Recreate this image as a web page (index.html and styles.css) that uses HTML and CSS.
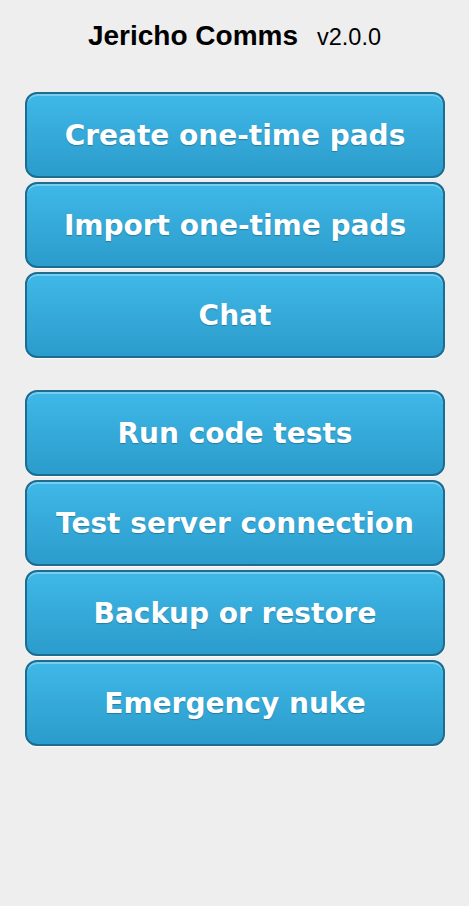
FILE: index.html
```html
<!DOCTYPE html>
<html>
<head>
<meta charset="utf-8">
<link rel="stylesheet" href="styles.css">
</head>
<body>
<header class="title">
  <span class="name">Jericho Comms</span>
  <span class="version">v2.0.0</span>
</header>
<main class="menu">
  <div class="group">
    <button class="btn">Create one-time pads</button>
    <button class="btn">Import one-time pads</button>
    <button class="btn">Chat</button>
  </div>
  <div class="group">
    <button class="btn">Run code tests</button>
    <button class="btn">Test server connection</button>
    <button class="btn">Backup or restore</button>
    <button class="btn">Emergency nuke</button>
  </div>
</main>
</body>
</html>
```
FILE: styles.css
```css
html, body {
  margin: 0;
  padding: 0;
  background: #eeeeee;
  height: 100%;
}
.title {
  display: flex;
  justify-content: center;
  align-items: baseline;
  gap: 19px;
  padding-top: 20px;
  height: 71px;
  box-sizing: border-box;
  font-family: "Liberation Sans", Arial, sans-serif;
  color: #000;
}
.name {
  font-weight: bold;
  font-size: 28px;
}
.version {
  font-size: 23.5px;
}
.menu {
  display: flex;
  flex-direction: column;
  gap: 32px;
  padding: 21px 24px 0 25px;
}
.group {
  display: flex;
  flex-direction: column;
  gap: 4px;
}
.btn {
  display: block;
  width: 100%;
  height: 86px;
  margin: 0;
  padding: 0;
  border: 2px solid #1c6d91;
  border-radius: 12px;
  background: linear-gradient(#3fb8e8, #2b9ccb);
  box-shadow: inset 0 2px 0 rgba(255,255,255,0.3), 0 1px 1px rgba(255,255,255,0.9);
  color: #fff;
  font-family: "DejaVu Sans", sans-serif;
  font-weight: bold;
  font-size: 28px;
  text-shadow: 0 1px 1px rgba(0,0,0,0.25);
  cursor: pointer;
}
```
